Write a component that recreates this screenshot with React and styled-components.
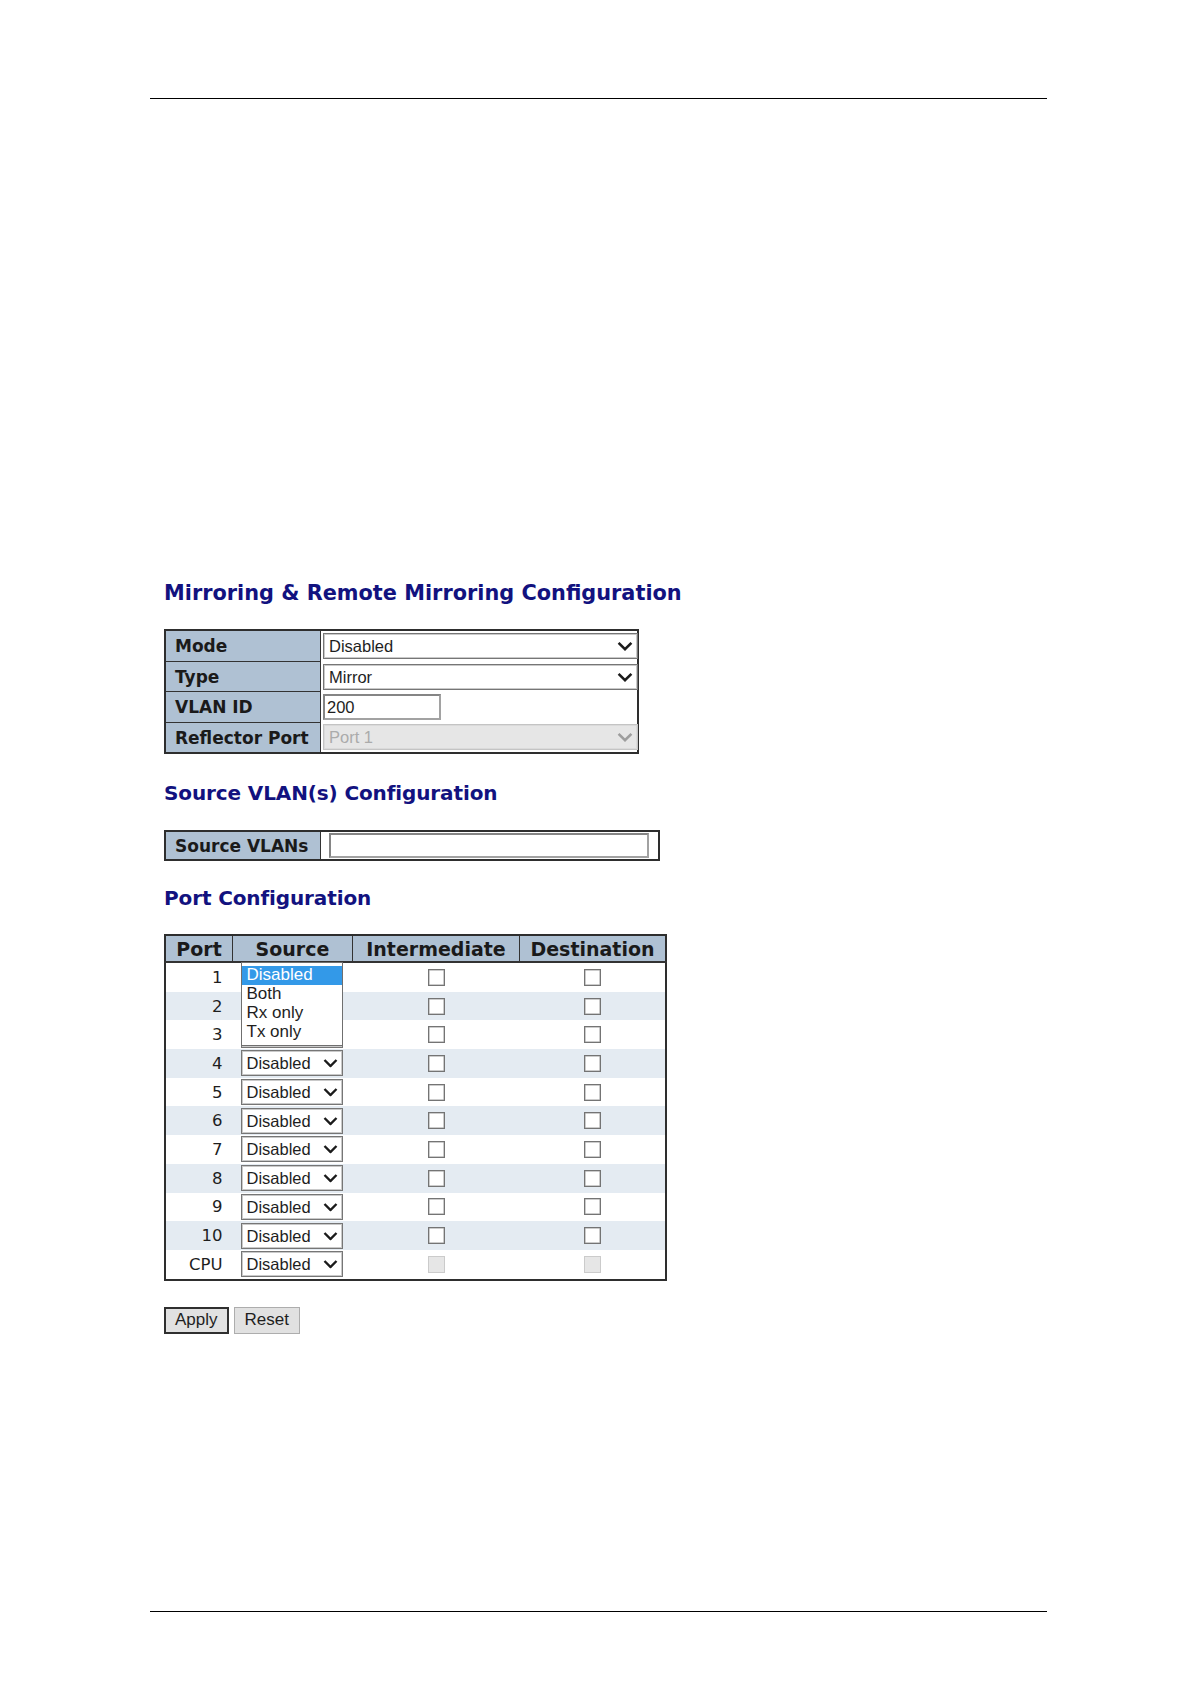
import React from 'react'
import styled, { createGlobalStyle } from 'styled-components'

const GlobalStyle = createGlobalStyle`
  html, body {
    margin: 0;
    padding: 0;
    background: #fff;
  }
  body {
    font-family: 'DejaVu Sans', Verdana, sans-serif;
    color: #1a1a1a;
  }
`

const Sheet = styled.div`
  width: 897px;
  min-height: 1684px;
  margin-left: 150px;
  display: flex;
  flex-direction: column;
`

const Rule = styled.hr`
  border: 0;
  height: 1px;
  background: #000;
  margin: ${p => (p.$footer ? 'auto 0 72px' : '98px 0 0')};
`

const Content = styled.div`
  display: flex;
  flex-direction: column;
  align-items: flex-start;
  padding-left: 14px;
`

const Title = styled.h2`
  margin: ${p => p.$gap}px 0 0;
  font-family: 'DejaVu Sans', Verdana, sans-serif;
  font-weight: bold;
  font-size: ${p => p.$size || 20}px;
  letter-spacing: ${p => (p.$size ? 0 : -0.12)}px;
  line-height: 24px;
  color: #12127f;
`

const ConfigTable = styled.table`
  margin-top: ${p => p.$gap}px;
  border-collapse: collapse;
  table-layout: fixed;
  width: ${p => p.$w}px;
  border: 2px solid #2e2e2e;
`

const Label = styled.th`
  width: ${p => p.$w}px;
  height: ${p => p.$h || 29}px;
  padding: 0 0 0 9px;
  background: #afc1d3;
  border: 1px solid #333;
  text-align: left;
  font-family: 'DejaVu Sans', Verdana, sans-serif;
  font-weight: bold;
  font-size: 17px;
  color: #1a1a1a;
  white-space: nowrap;
`

const Value = styled.td`
  padding: 0 0 0 ${p => p.$pad || 2}px;
  background: #fff;
  border: 0;
`

const SelectWrap = styled.div`
  position: relative;
  width: ${p => p.$w}px;
`

const NativeSelect = styled.select`
  appearance: none;
  display: block;
  width: 100%;
  height: 26px;
  margin: 0;
  padding: 0 0 0 5px;
  border-radius: 0;
  border: 1px solid ${p => (p.disabled ? '#c4c4c4' : '#767676')};
  box-shadow: inset 0 0 0 1px ${p => (p.disabled ? '#dadada' : '#c9c9c9')};
  background: ${p => (p.disabled ? '#e6e6e6' : '#fff')};
  color: ${p => (p.disabled ? '#ababab' : '#1e1e1e')};
  opacity: 1;
  font-family: 'Liberation Sans', Arial, sans-serif;
  font-size: 16.5px;
`

const Chevron = styled.svg`
  position: absolute;
  right: ${p => p.$right}px;
  top: 50%;
  transform: translateY(-50%);
  pointer-events: none;
`

const Select = ({ width, value, options, disabled, small }) => (
  <SelectWrap $w={width}>
    <NativeSelect value={value} disabled={disabled} onChange={() => {}}>
      {options.map(o => (
        <option key={o}>{o}</option>
      ))}
    </NativeSelect>
    <Chevron
      $right={small ? 5 : 5}
      width={small ? 15 : 16}
      height={small ? 9 : 10}
      viewBox="0 0 15 9"
    >
      <path
        d="M1.5 1.5 L7.5 7.5 L13.5 1.5"
        fill="none"
        stroke={disabled ? '#9d9d9d' : '#1b1b1b'}
        strokeWidth="2.4"
      />
    </Chevron>
  </SelectWrap>
)

const TextInput = styled.input`
  display: block;
  box-sizing: border-box;
  width: ${p => p.$w}px;
  height: ${p => p.$h}px;
  margin: 0;
  padding: 0 0 0 2px;
  border: 2px solid #a2a2a2;
  border-top-color: #858585;
  border-left-color: #858585;
  background: #fff;
  color: #1e1e1e;
  font-family: 'Liberation Sans', Arial, sans-serif;
  font-size: 16.5px;
`

const PortTable = styled.table`
  margin-top: 24px;
  border-collapse: collapse;
  table-layout: fixed;
  width: 496px;
  border: 2px solid #2e2e2e;
`

const HeadCell = styled.th`
  width: ${p => p.$w}px;
  height: 25px;
  padding: 0;
  background: #afc1d3;
  border: 1px solid #333;
  border-bottom: 2px solid #333;
  text-align: center;
  font-family: 'DejaVu Sans', Verdana, sans-serif;
  font-weight: bold;
  font-size: 19px;
  color: #1a1a1a;
`

const BodyRow = styled.tr`
  background: ${p => (p.$even ? '#e4ebf2' : '#fff')};
`

const PortCell = styled.td`
  height: 28.7px;
  padding: 0 10px 0 0;
  text-align: right;
  font-family: 'DejaVu Sans', Verdana, sans-serif;
  font-size: 16.5px;
  color: #1e1e1e;
`

const SourceCell = styled.td`
  padding: 0 0 0 8px;
`

const CheckCell = styled.td`
  padding: 0;
  text-align: center;
`

const Anchor = styled.div`
  position: relative;
`

const ListBox = styled.ul`
  position: absolute;
  left: 0;
  top: -2px;
  z-index: 2;
  box-sizing: border-box;
  width: 102px;
  height: 84px;
  margin: 0;
  padding: 3px 0 0;
  list-style: none;
  background: #fff;
  border: 1px solid #6f6f6f;
  font-family: 'Liberation Sans', Arial, sans-serif;
  font-size: 17px;
`

const ListOption = styled.li`
  height: 18.8px;
  line-height: 18px;
  padding-left: 5px;
  background: ${p => (p.$active ? '#3399e8' : 'transparent')};
  color: ${p => (p.$active ? '#fff' : '#1e1e1e')};
`

const Check = styled.input.attrs({ type: 'checkbox' })`
  appearance: none;
  display: block;
  width: 17px;
  height: 17px;
  margin: 0 auto;
  border: 1px solid ${p => (p.disabled ? '#cbcbcb' : '#747474')};
  box-shadow: inset 0 0 0 ${p => (p.disabled ? 0 : 0.5)}px #9a9a9a;
  background: ${p => (p.disabled ? '#e6e6e6' : '#fff')};
  border-radius: 0;
`

const ButtonRow = styled.div`
  display: flex;
  gap: 5px;
  margin-top: 26px;
`

const Button = styled.button`
  height: 27px;
  margin: 0;
  padding: 0 ${p => (p.$primary ? 9 : 10)}px;
  background: #e1e1e1;
  border: ${p => (p.$primary ? '2px solid #2f2f2f' : '1px solid #adadad')};
  border-radius: 0;
  color: #1e1e1e;
  font-family: 'Liberation Sans', Arial, sans-serif;
  font-size: 17px;
`

const sourceOptions = ['Disabled', 'Both', 'Rx only', 'Tx only']
const ports = ['1', '2', '3', '4', '5', '6', '7', '8', '9', '10', 'CPU']

export default function App() {
  return (
    <>
      <GlobalStyle />
      <Sheet>
        <Rule />
        <Content>
          <Title $gap={482} $size={20.85}>Mirroring &amp; Remote Mirroring Configuration</Title>

          <ConfigTable $gap={24} $w={475}>
            <tbody>
              <tr>
                <Label $w={145} $h={30}>Mode</Label>
                <Value>
                  <Select width={315} value="Disabled" options={['Disabled', 'Enabled']} />
                </Value>
              </tr>
              <tr>
                <Label>Type</Label>
                <Value>
                  <Select width={315} value="Mirror" options={['Mirror', 'Source', 'Destination']} />
                </Value>
              </tr>
              <tr>
                <Label $h={30}>VLAN ID</Label>
                <Value>
                  <TextInput $w={118} $h={26} defaultValue="200" />
                </Value>
              </tr>
              <tr>
                <Label>Reflector Port</Label>
                <Value>
                  <Select width={315} value="Port 1" options={['Port 1']} disabled />
                </Value>
              </tr>
            </tbody>
          </ConfigTable>

          <Title $gap={27}>Source VLAN(s) Configuration</Title>

          <ConfigTable $gap={25} $w={496}>
            <tbody>
              <tr>
                <Label $w={145} $h={27}>Source VLANs</Label>
                <Value $pad={8}>
                  <TextInput $w={320} $h={25} defaultValue="" />
                </Value>
              </tr>
            </tbody>
          </ConfigTable>

          <Title $gap={25}>Port Configuration</Title>

          <PortTable>
            <thead>
              <tr>
                <HeadCell $w={66}>Port</HeadCell>
                <HeadCell $w={119}>Source</HeadCell>
                <HeadCell $w={166}>Intermediate</HeadCell>
                <HeadCell $w={145}>Destination</HeadCell>
              </tr>
            </thead>
            <tbody>
              {ports.map((p, i) => {
                const cpu = p === 'CPU'
                return (
                  <BodyRow key={p} $even={i % 2 === 1}>
                    <PortCell>{p}</PortCell>
                    <SourceCell>
                      {i === 0 ? (
                        <Anchor>
                          <Select width={102} value="Disabled" options={sourceOptions} small />
                          <ListBox>
                            {sourceOptions.map((o, k) => (
                              <ListOption key={o} $active={k === 0}>{o}</ListOption>
                            ))}
                          </ListBox>
                        </Anchor>
                      ) : (
                        <Select width={102} value="Disabled" options={sourceOptions} small />
                      )}
                    </SourceCell>
                    <CheckCell>
                      <Check disabled={cpu} />
                    </CheckCell>
                    <CheckCell>
                      <Check disabled={cpu} />
                    </CheckCell>
                  </BodyRow>
                )
              })}
            </tbody>
          </PortTable>

          <ButtonRow>
            <Button $primary>Apply</Button>
            <Button>Reset</Button>
          </ButtonRow>
        </Content>
        <Rule $footer />
      </Sheet>
    </>
  )
}
